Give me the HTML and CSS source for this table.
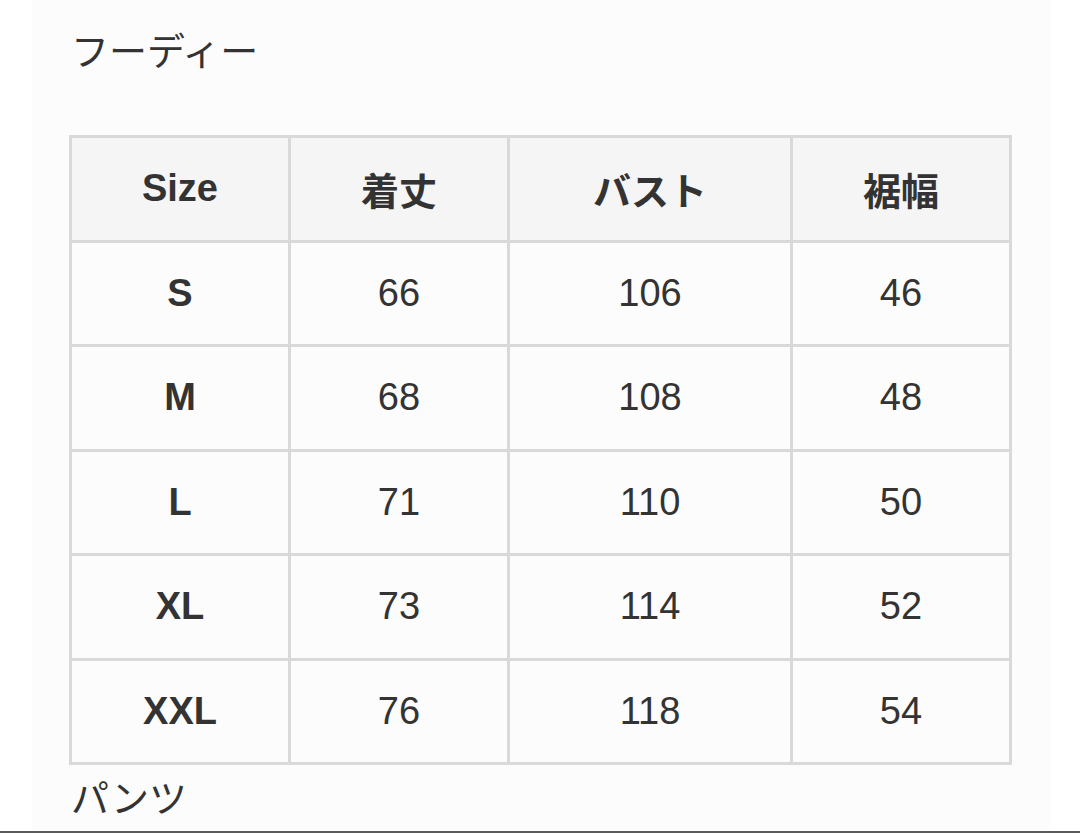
FILE: index.html
```html
<!DOCTYPE html>
<html lang="ja">
<head>
<meta charset="utf-8">
<title>サイズ表</title>
<link rel="stylesheet" href="styles.css">
</head>
<body>
<div class="page">
  <div class="panel">
    <p class="label">フーディー</p>
    <table class="sizes">
      <colgroup>
        <col class="c-size">
        <col class="c-len">
        <col class="c-bust">
        <col class="c-hem">
      </colgroup>
      <thead>
        <tr><th>Size</th><th>着丈</th><th>バスト</th><th>裾幅</th></tr>
      </thead>
      <tbody>
        <tr><th>S</th><td>66</td><td>106</td><td>46</td></tr>
        <tr><th>M</th><td>68</td><td>108</td><td>48</td></tr>
        <tr><th>L</th><td>71</td><td>110</td><td>50</td></tr>
        <tr><th>XL</th><td>73</td><td>114</td><td>52</td></tr>
        <tr><th>XXL</th><td>76</td><td>118</td><td>54</td></tr>
      </tbody>
    </table>
    <p class="label next">パンツ</p>
  </div>
</div>
</body>
</html>
```
FILE: styles.css
```css
html, body {
  margin: 0;
  padding: 0;
  background: #ffffff;
}
body {
  font-family: "Liberation Sans", Arial, "Noto Sans CJK JP", sans-serif;
  color: #333333;
}
.page {
  height: 833px;
  box-sizing: border-box;
  border-bottom: 2px solid #5a5a5a;
  display: flex;
  overflow: hidden;
}
.panel {
  margin-left: 32px;
  width: 1018px;
  background: #fcfcfc;
  padding: 23px 0 0 37px;
  box-sizing: border-box;
}
.label {
  margin: 0;
  font-family: "Noto Sans CJK JP", sans-serif;
  font-size: 38px;
  line-height: 52px;
  font-weight: 400;
  color: #333333;
  padding-left: 2px;
}
.next {
  margin-top: 5px;
}
.sizes {
  margin-top: 60px;
  border-collapse: collapse;
  table-layout: fixed;
  width: 940px;
}
.c-size { width: 219px; }
.c-len { width: 219px; }
.c-bust { width: 283px; }
.c-hem { width: 219px; }
.sizes th,
.sizes td {
  border: 3px solid #d9d9d9;
  height: 101.5px;
  padding: 0;
  text-align: center;
  vertical-align: middle;
  font-size: 38px;
  color: #333333;
  background: #fcfcfc;
}
.sizes th {
  font-weight: 700;
}
.sizes td {
  font-weight: 400;
}
.sizes thead th {
  background: #f5f5f5;
}
```
